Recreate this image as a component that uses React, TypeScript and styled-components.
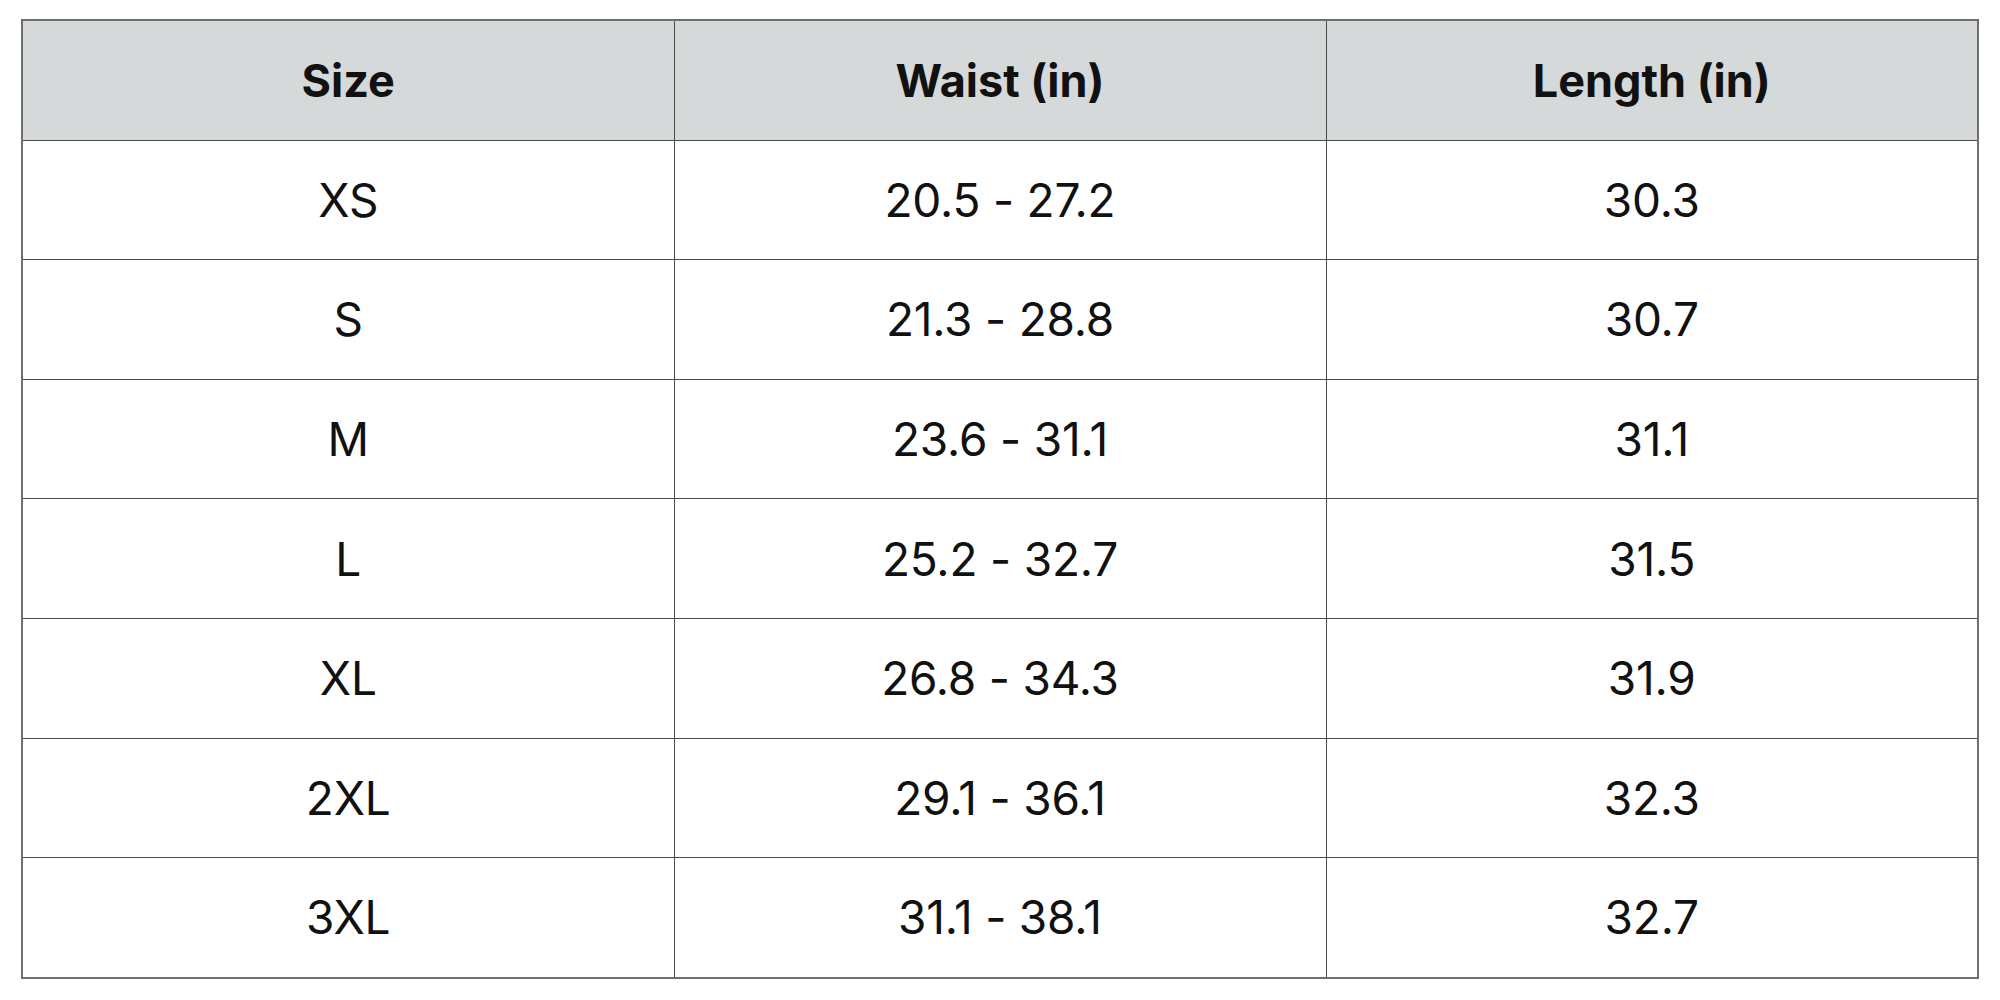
import { createGlobalStyle } from "styled-components";
import styled from "styled-components";

const GlobalStyle = createGlobalStyle`
  html, body {
    margin: 0;
    padding: 0;
    background: #ffffff;
  }
  body {
    font-family: Inter, "Open Sans", "Liberation Sans", sans-serif;
    color: #111111;
  }
`;

const Page = styled.div`
  width: 2000px;
  height: 1000px;
  padding: 19px 21px;
  box-sizing: border-box;
`;

const Table = styled.table`
  width: 1958px;
  border-collapse: collapse;
  table-layout: fixed;
  border: 2px solid #6f6f6f;
`;

const HeadCell = styled.th`
  height: 118.6px;
  padding: 0;
  background: #d5d9da;
  border: 1px solid #4a4a4a;
  font-size: 45px;
  font-weight: 700;
  color: #111111;
  text-align: center;
  vertical-align: middle;
`;

const Cell = styled.td`
  height: 118.6px;
  padding: 0;
  border: 1px solid #4a4a4a;
  font-size: 46px;
  font-weight: 400;
  color: #111111;
  text-align: center;
  vertical-align: middle;
  letter-spacing: -0.2px;
`;

const columns = ["Size", "Waist (in)", "Length (in)"];

const rows: [string, string, string][] = [
  ["XS", "20.5 - 27.2", "30.3"],
  ["S", "21.3 - 28.8", "30.7"],
  ["M", "23.6 - 31.1", "31.1"],
  ["L", "25.2 - 32.7", "31.5"],
  ["XL", "26.8 - 34.3", "31.9"],
  ["2XL", "29.1 - 36.1", "32.3"],
  ["3XL", "31.1 - 38.1", "32.7"],
];

export default function App() {
  return (
    <>
      <GlobalStyle />
      <Page>
        <Table>
          <thead>
            <tr>
              {columns.map((c) => (
                <HeadCell key={c}>{c}</HeadCell>
              ))}
            </tr>
          </thead>
          <tbody>
            {rows.map((r) => (
              <tr key={r[0]}>
                {r.map((v, i) => (
                  <Cell key={i}>{v}</Cell>
                ))}
              </tr>
            ))}
          </tbody>
        </Table>
      </Page>
    </>
  );
}
